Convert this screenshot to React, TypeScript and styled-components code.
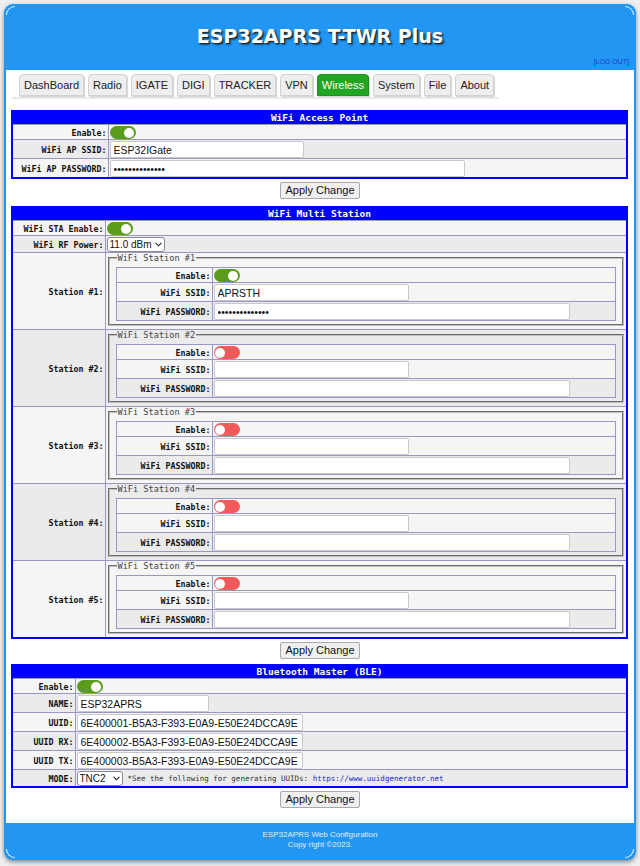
import React from "react";
import styled, { createGlobalStyle, css } from "styled-components";

const MONO = `"DejaVu Sans Mono", "Liberation Mono", monospace`;
const SANS = `"Liberation Sans", Arial, sans-serif`;

const GlobalStyle = createGlobalStyle`
  html, body { margin: 0; padding: 0; background: #eceef0; }
  body { font-family: ${SANS}; color: #111; }
  * { box-sizing: border-box; }
`;

const Frame = styled.div`
  position: relative;
  margin: 4px 4px 6px 4px;
  background: #2196f3;
  border-radius: 9px;
  box-shadow: 0 2px 4px rgba(0, 0, 0, 0.45);
  padding: 0 2px;
  display: flex;
  flex-direction: column;
`;

type CornerPos = "tl" | "tr" | "bl" | "br";
const Corner = styled.span<{ $pos: CornerPos }>`
  position: absolute;
  width: 9px;
  height: 9px;
  border: 0 solid rgba(255, 255, 255, 0.9);
  ${(p) =>
    p.$pos === "tl" &&
    css`top: 2px; left: 2px; border-top-width: 1.5px; border-left-width: 1.5px; border-top-left-radius: 9px;`}
  ${(p) =>
    p.$pos === "tr" &&
    css`top: 2px; right: 2px; border-top-width: 1.5px; border-right-width: 1.5px; border-top-right-radius: 9px;`}
  ${(p) =>
    p.$pos === "bl" &&
    css`bottom: 2px; left: 2px; border-bottom-width: 1.5px; border-left-width: 1.5px; border-bottom-left-radius: 9px;`}
  ${(p) =>
    p.$pos === "br" &&
    css`bottom: 2px; right: 2px; border-bottom-width: 1.5px; border-right-width: 1.5px; border-bottom-right-radius: 9px;`}
`;

const Header = styled.header`
  height: 66px;
  display: flex;
  flex-direction: column;
  align-items: center;
  padding-top: 21px;
`;

const Title = styled.h1`
  margin: 0;
  font-family: "DejaVu Sans", Verdana, sans-serif;
  font-weight: bold;
  font-size: 19px;
  line-height: 22px;
  color: #fff;
  text-shadow: 1px 1px 1px #222, 2px 2px 2px rgba(0, 0, 0, 0.45);
`;

const LogOut = styled.a`
  margin-top: auto;
  margin-bottom: 4px;
  margin-right: 5px;
  align-self: flex-end;
  font-family: ${SANS};
  font-size: 7px;
  line-height: 9px;
  color: #1b3fc8;
  text-decoration: none;
`;

const Panel = styled.main`
  background: #fff;
  padding: 4px 0 15px 0;
  display: flex;
  flex-direction: column;
`;

const TabBar = styled.nav`
  align-self: flex-start;
  display: flex;
  gap: 4px;
  margin-left: 6px;
  padding: 0 4px 1px 7px;
  border-bottom: 2px solid #e9e9e9;
`;

const Tab = styled.a<{ $active?: boolean }>`
  height: 22px;
  display: flex;
  align-items: center;
  padding: 0 4px;
  font-family: ${SANS};
  font-size: 11px;
  color: ${(p) => (p.$active ? "#fff" : "#222")};
  background: ${(p) => (p.$active ? "#22a522" : "#eeeeee")};
  border: 1px solid ${(p) => (p.$active ? "#1d921d" : "#d2d2d2")};
  border-radius: 4px 4px 0 0;
  box-shadow: 1px 1px 1px rgba(0, 0, 0, 0.18);
  text-decoration: none;
`;

const Card = styled.table<{ $top?: number }>`
  border-collapse: collapse;
  margin: ${(p) => p.$top ?? 0}px 6px 0 5px;
  width: calc(100% - 11px);
  border: 2px solid #0000ff;
`;

const HeadCell = styled.th`
  background: #0000ff;
  color: #fff;
  font-family: ${MONO};
  font-weight: bold;
  font-size: 9.5px;
  height: 13px;
  line-height: 12px;
  padding: 0;
  text-align: center;
`;

const Row = styled.tr<{ $dark?: boolean }>`
  background: ${(p) => (p.$dark ? "#ebebeb" : "#f5f5f5")};
`;

const LabelCell = styled.td<{ $w: number }>`
  width: ${(p) => p.$w}px;
  border: 1px solid #9898c8;
  font-family: ${MONO};
  font-weight: bold;
  font-size: 8.3px;
  line-height: 10px;
  color: #111;
  text-align: right;
  white-space: nowrap;
  padding: 1px 1px 0 2px;
`;

const ValueCell = styled.td<{ $pad?: string }>`
  border: 1px solid #9898c8;
  padding: ${(p) => p.$pad ?? "1px 1px 0 1px"};
  font-size: 0;
  line-height: 0;
  text-align: left;
  vertical-align: middle;
`;

const Toggle = styled.span<{ $on?: boolean }>`
  display: inline-block;
  position: relative;
  width: 26px;
  height: 13px;
  border-radius: 7px;
  vertical-align: top;
  background: ${(p) => (p.$on ? "#5a9d1c" : "#f25a5a")};
  &::after {
    content: "";
    position: absolute;
    top: 1.5px;
    left: ${(p) => (p.$on ? "14.5px" : "1.5px")};
    width: 10px;
    height: 10px;
    border-radius: 50%;
    background: #fff;
  }
`;

const TextInput = styled.input<{ $w: number }>`
  width: ${(p) => p.$w}px;
  height: 17px;
  margin: 0;
  padding: 0 3px;
  border: 1px solid #c9c9c9;
  border-radius: 2px;
  background: #fff;
  font-family: ${SANS};
  font-size: 10.5px;
  color: #111;
  vertical-align: top;
  outline: none;
`;

const SelectWrap = styled.span`
  position: relative;
  display: inline-block;
  vertical-align: top;
`;

const Select = styled.select<{ $w: number }>`
  appearance: none;
  -webkit-appearance: none;
  width: ${(p) => p.$w}px;
  height: 15px;
  margin: 0;
  padding: 0 9px 0 2px;
  font-family: ${SANS};
  font-size: 10px;
  line-height: 13px;
  color: #111;
  border: 1px solid #8a8a8a;
  border-radius: 3px;
  background: #fff;
  vertical-align: top;
`;

const Chevron = styled.svg`
  position: absolute;
  right: 3px;
  top: 5px;
  width: 7px;
  height: 5px;
  pointer-events: none;
`;

const Note = styled.span`
  display: inline-block;
  font-family: ${MONO};
  font-size: 7.5px;
  line-height: 15px;
  color: #333;
  margin-left: 5px;
  vertical-align: top;
`;

const NoteLink = styled.a`
  color: #1a26c8;
  text-decoration: none;
`;

const ButtonRow = styled.div`
  display: flex;
  justify-content: center;
  margin: 3px 0 0 0;
`;

const ApplyButton = styled.button`
  height: 17px;
  padding: 0 4px;
  font-family: ${SANS};
  font-size: 11px;
  color: #111;
  background: #efefef;
  border: 1px solid #a9a9a9;
  border-radius: 2px;
  line-height: 15px;
`;

const Fieldset = styled.fieldset`
  margin: 0 0 3px 0;
  padding: 4px 6px 3px 6px;
  border: 2px groove #c0c0c0;
`;

const Legend = styled.legend`
  font-family: ${MONO};
  font-size: 8.6px;
  line-height: 10px;
  color: #444;
  padding: 0 1px;
  margin-left: 1px;
`;

const InnerCard = styled.table`
  border-collapse: collapse;
  width: 100%;
  border: 1px solid #7a7ab8;
`;

const Footer = styled.footer`
  height: 37px;
  padding-top: 7px;
  display: flex;
  flex-direction: column;
  align-items: center;
  font-family: ${SANS};
  font-size: 8px;
  line-height: 10px;
  color: #e3ecfb;
`;

const TABS = ["DashBoard", "Radio", "IGATE", "DIGI", "TRACKER", "VPN", "Wireless", "System", "File", "About"];

const PW = "aprspassword12";

function Dropdown({ w, value, label }: { w: number; value: string; label: string }) {
  return (
    <SelectWrap>
      <Select $w={w} defaultValue={value}>
        <option value={value}>{label}</option>
      </Select>
      <Chevron viewBox="0 0 7 5">
        <path d="M0.6 0.8 L3.5 3.8 L6.4 0.8" fill="none" stroke="#222" strokeWidth="1.1" />
      </Chevron>
    </SelectWrap>
  );
}

function Station({ n, on, ssid, pw }: { n: number; on: boolean; ssid: string; pw: string }) {
  return (
    <Row $dark={n % 2 === 0}>
      <LabelCell $w={93}>Station #{n}:</LabelCell>
      <ValueCell $pad="0 2px 0 2px">
        <Fieldset>
          <Legend>WiFi Station #{n}</Legend>
          <InnerCard>
            <tbody>
              <Row>
                <LabelCell $w={96}>Enable:</LabelCell>
                <ValueCell>
                  <Toggle $on={on} />
                </ValueCell>
              </Row>
              <Row>
                <LabelCell $w={96}>WiFi SSID:</LabelCell>
                <ValueCell>
                  <TextInput $w={195} defaultValue={ssid} />
                </ValueCell>
              </Row>
              <Row $dark>
                <LabelCell $w={96}>WiFi PASSWORD:</LabelCell>
                <ValueCell>
                  <TextInput $w={356} type="password" defaultValue={pw} />
                </ValueCell>
              </Row>
            </tbody>
          </InnerCard>
        </Fieldset>
      </ValueCell>
    </Row>
  );
}

export default function App() {
  return (
    <>
      <GlobalStyle />
      <Frame>
        <Corner $pos="tl" />
        <Corner $pos="tr" />
        <Corner $pos="bl" />
        <Corner $pos="br" />
        <Header>
          <Title>ESP32APRS T-TWR Plus</Title>
          <LogOut href="#">[LOG OUT]</LogOut>
        </Header>
        <Panel>
          <TabBar>
            {TABS.map((t) => (
              <Tab key={t} $active={t === "Wireless"}>
                {t}
              </Tab>
            ))}
          </TabBar>

          <Card $top={11}>
            <tbody>
              <tr>
                <HeadCell colSpan={2}>WiFi Access Point</HeadCell>
              </tr>
              <Row>
                <LabelCell $w={96}>Enable:</LabelCell>
                <ValueCell>
                  <Toggle $on />
                </ValueCell>
              </Row>
              <Row $dark>
                <LabelCell $w={96}>WiFi AP SSID:</LabelCell>
                <ValueCell>
                  <TextInput $w={194} defaultValue="ESP32IGate" />
                </ValueCell>
              </Row>
              <Row>
                <LabelCell $w={96}>WiFi AP PASSWORD:</LabelCell>
                <ValueCell>
                  <TextInput $w={355} type="password" defaultValue={PW} />
                </ValueCell>
              </Row>
            </tbody>
          </Card>
          <ButtonRow>
            <ApplyButton>Apply Change</ApplyButton>
          </ButtonRow>

          <Card $top={7}>
            <tbody>
              <tr>
                <HeadCell colSpan={2}>WiFi Multi Station</HeadCell>
              </tr>
              <Row>
                <LabelCell $w={93}>WiFi STA Enable:</LabelCell>
                <ValueCell>
                  <Toggle $on />
                </ValueCell>
              </Row>
              <Row $dark>
                <LabelCell $w={93}>WiFi RF Power:</LabelCell>
                <ValueCell>
                  <Dropdown w={58} value="11.0" label="11.0 dBm" />
                </ValueCell>
              </Row>
              {[1, 2, 3, 4, 5].map((n) => (
                <Station key={n} n={n} on={n === 1} ssid={n === 1 ? "APRSTH" : ""} pw={n === 1 ? PW : ""} />
              ))}
            </tbody>
          </Card>
          <ButtonRow>
            <ApplyButton>Apply Change</ApplyButton>
          </ButtonRow>

          <Card $top={5}>
            <tbody>
              <tr>
                <HeadCell colSpan={2}>Bluetooth Master (BLE)</HeadCell>
              </tr>
              <Row>
                <LabelCell $w={63}>Enable:</LabelCell>
                <ValueCell>
                  <Toggle $on />
                </ValueCell>
              </Row>
              <Row $dark>
                <LabelCell $w={63}>NAME:</LabelCell>
                <ValueCell>
                  <TextInput $w={132} defaultValue="ESP32APRS" />
                </ValueCell>
              </Row>
              <Row>
                <LabelCell $w={63}>UUID:</LabelCell>
                <ValueCell>
                  <TextInput $w={226} defaultValue="6E400001-B5A3-F393-E0A9-E50E24DCCA9E" />
                </ValueCell>
              </Row>
              <Row $dark>
                <LabelCell $w={63}>UUID RX:</LabelCell>
                <ValueCell>
                  <TextInput $w={226} defaultValue="6E400002-B5A3-F393-E0A9-E50E24DCCA9E" />
                </ValueCell>
              </Row>
              <Row>
                <LabelCell $w={63}>UUID TX:</LabelCell>
                <ValueCell>
                  <TextInput $w={226} defaultValue="6E400003-B5A3-F393-E0A9-E50E24DCCA9E" />
                </ValueCell>
              </Row>
              <Row $dark>
                <LabelCell $w={63}>MODE:</LabelCell>
                <ValueCell>
                  <Dropdown w={46} value="TNC2" label="TNC2" />
                  <Note>
                    *See the following for generating UUIDs:{" "}
                    <NoteLink href="#">https://www.uuidgenerator.net</NoteLink>
                  </Note>
                </ValueCell>
              </Row>
            </tbody>
          </Card>
          <ButtonRow>
            <ApplyButton>Apply Change</ApplyButton>
          </ButtonRow>
        </Panel>
        <Footer>
          <span>ESP32APRS Web Configuration</span>
          <span>Copy right ©2023.</span>
        </Footer>
      </Frame>
    </>
  );
}
